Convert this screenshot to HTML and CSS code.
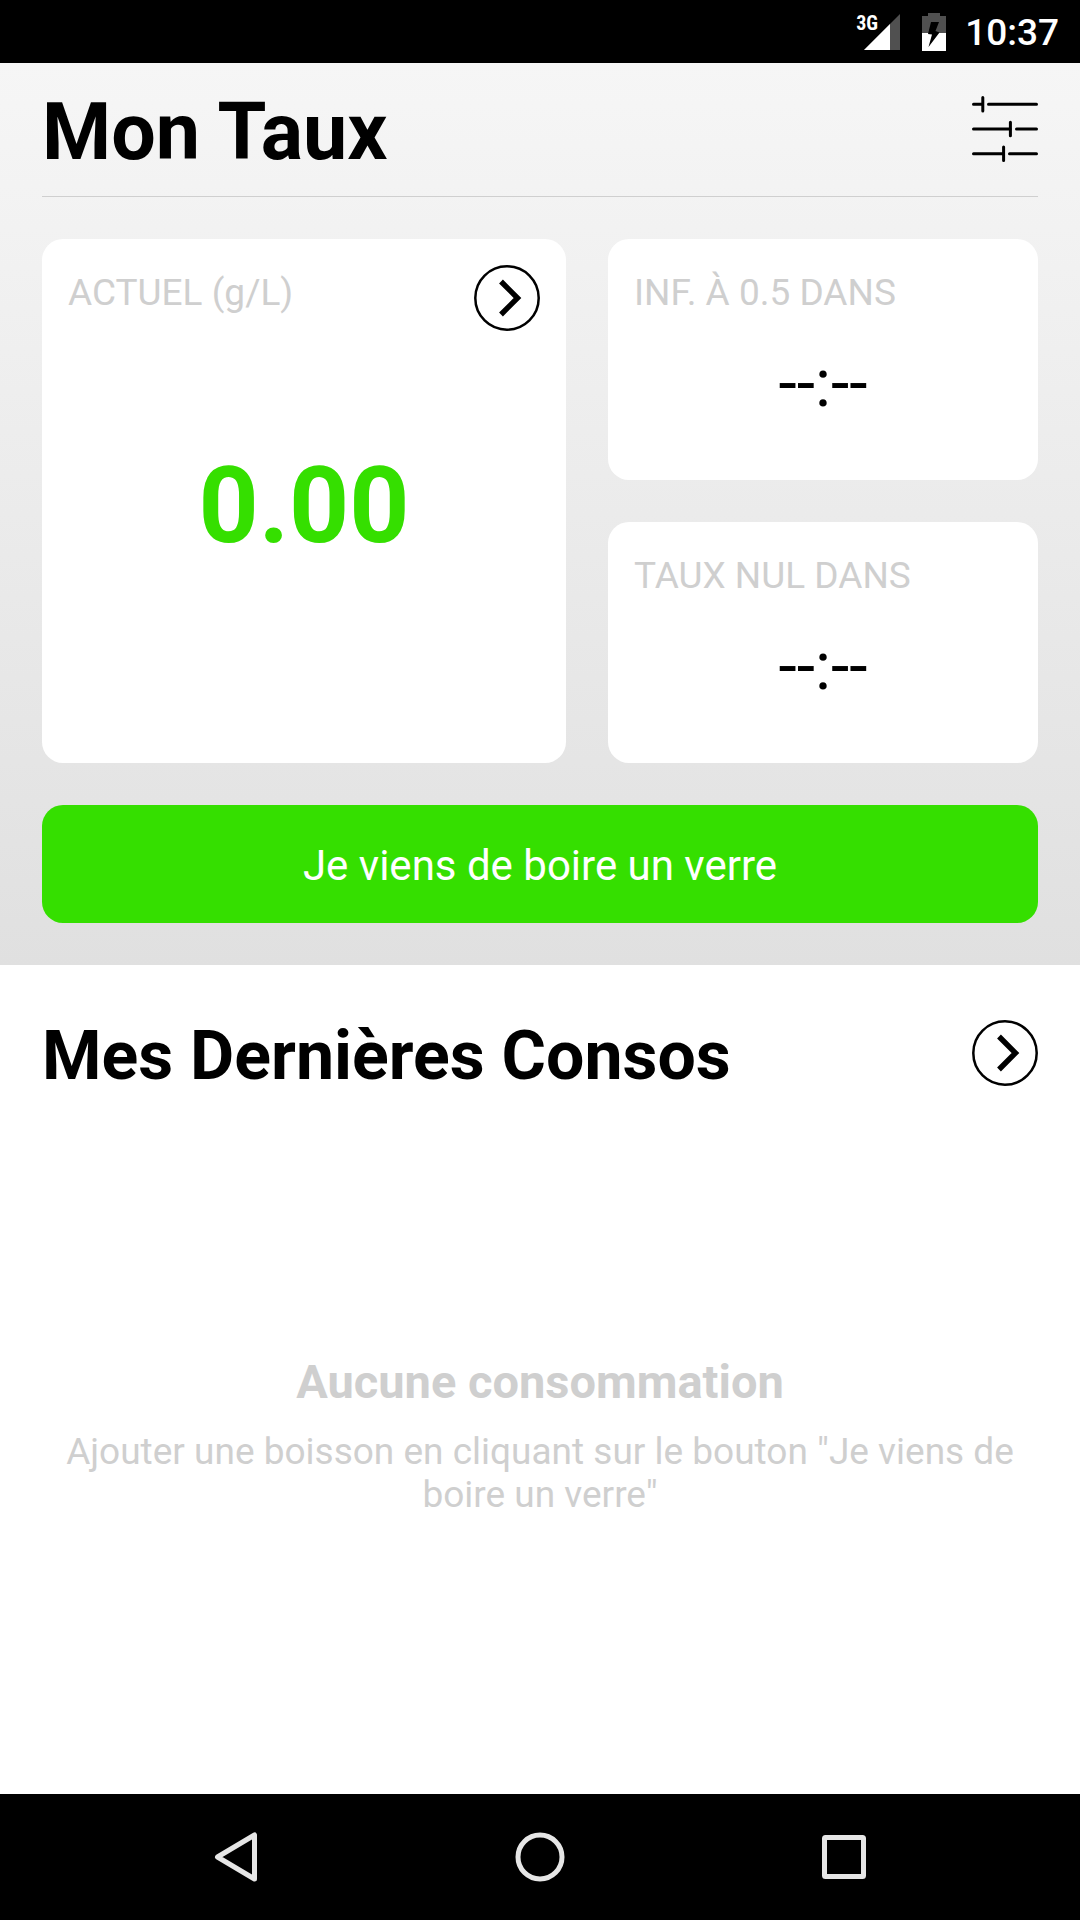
FILE: index.html
```html
<!DOCTYPE html>
<html lang="fr">
<head>
  <meta charset="utf-8">
  <meta name="viewport" content="width=device-width, initial-scale=1">
  <title>Mon Taux</title>
  <link rel="stylesheet" href="styles.css">
</head>
<body>
  <div class="status-bar">
    <div class="signal">
      <svg width="44" height="38" viewBox="0 0 44 38" aria-hidden="true">
        <path d="M44 1V37H8z" fill="#505050"/>
        <path d="M34 11V37H8z" fill="#fff"/>
      </svg>
      <span class="network">3G</span>
    </div>
    <svg width="24" height="38" viewBox="0 0 24 38" aria-hidden="true">
      <path d="M0 3H6V0H18V3H24V20H0z" fill="#505050"/>
      <path d="M0 20H24V38H0z" fill="#fff"/>
      <path d="M9 9H17L13.5 18L17.5 19.5L6.5 34L10 21.5L6 21z" fill="#000"/>
    </svg>
    <time class="clock">10:37</time>
  </div>

  <main class="screen">
    <section class="rate">
      <header class="row rate-header">
        <h1 class="title">Mon Taux</h1>
        <button class="icon-button" type="button" aria-label="Réglages">
          <svg width="66" height="66" viewBox="0 0 66 66" fill="none" stroke="#000" stroke-width="3" stroke-linecap="round">
            <path d="M1.5 8.3H10.5M16.5 8.3H64.5M1.5 33H38M44.5 33H64.5M1.5 57.7H31.5M37.5 57.7H64.5"/>
            <path d="M10.8 1.5V15M38.4 26.2V39.7M31.6 51V64.5"/>
          </svg>
        </button>
      </header>

      <div class="cards">
        <article class="card card-main">
          <div class="card-head">
            <h2 class="label">ACTUEL (g/L)</h2>
            <button class="icon-button" type="button" aria-label="Détail du taux">
              <svg width="66" height="66" viewBox="0 0 66 66" fill="none" stroke="#000">
                <circle cx="33" cy="33" r="31.7" stroke-width="2.5"/>
                <path d="M27 16.5L43.5 33L27 49.5" stroke-width="5.4"/>
              </svg>
            </button>
          </div>
          <p class="rate-value">0.00</p>
        </article>
        <article class="card">
          <h2 class="label">INF. À 0.5 DANS</h2>
          <p class="delay">--:--</p>
        </article>
        <article class="card">
          <h2 class="label">TAUX NUL DANS</h2>
          <p class="delay">--:--</p>
        </article>
      </div>

      <button class="add-button" type="button">Je viens de boire un verre</button>
    </section>

    <section class="history">
      <header class="row">
        <h2 class="subtitle">Mes Dernières Consos</h2>
        <button class="icon-button" type="button" aria-label="Toutes les consommations">
          <svg width="66" height="66" viewBox="0 0 66 66" fill="none" stroke="#000">
            <circle cx="33" cy="33" r="31.7" stroke-width="2.5"/>
            <path d="M27 16.5L43.5 33L27 49.5" stroke-width="5.4"/>
          </svg>
        </button>
      </header>
      <div class="empty">
        <h3 class="empty-title">Aucune consommation</h3>
        <p class="empty-text">Ajouter une boisson en cliquant sur le bouton "Je viens de boire un verre"</p>
      </div>
    </section>
  </main>

  <nav class="nav-bar">
    <button class="nav-button" type="button" aria-label="Retour">
      <svg width="54" height="54" viewBox="0 0 54 54" fill="none" stroke="#e6e6e6" stroke-width="5" stroke-linejoin="round">
        <path d="M45.5 5V49L8.5 27z"/>
      </svg>
    </button>
    <button class="nav-button" type="button" aria-label="Accueil">
      <svg width="54" height="54" viewBox="0 0 54 54" fill="none" stroke="#e6e6e6" stroke-width="5">
        <circle cx="27" cy="27" r="22"/>
      </svg>
    </button>
    <button class="nav-button" type="button" aria-label="Applications récentes">
      <svg width="54" height="54" viewBox="0 0 54 54" fill="none" stroke="#e6e6e6" stroke-width="5">
        <rect x="7.5" y="7.5" width="39" height="39" rx="1"/>
      </svg>
    </button>
  </nav>
</body>
</html>
```

FILE: styles.css
```css
* {
  box-sizing: border-box;
}

body {
  margin: 0;
  min-height: 100vh;
  display: flex;
  flex-direction: column;
  background: #fff;
  color: #000;
  font-family: Roboto, "Liberation Sans", sans-serif;
}

h1,
h2,
h3,
p {
  margin: 0;
}

button {
  padding: 0;
  border: 0;
  background: none;
  font: inherit;
  cursor: pointer;
}

svg {
  display: block;
}

/* System status bar */
.status-bar {
  display: flex;
  align-items: center;
  justify-content: flex-end;
  gap: 19px;
  height: 63px;
  padding-right: 21px;
  background: #000;
  color: #fff;
}

.signal {
  position: relative;
  margin-right: 3px;
}

.network {
  position: absolute;
  top: 0;
  left: 0;
  font-family: "Roboto Condensed", Roboto, "Liberation Sans", sans-serif;
  font-size: 20px;
  font-weight: 700;
  line-height: 20px;
}

.clock {
  font-size: 37px;
  font-weight: 500;
  line-height: 44px;
  padding-top: 2px;
}

/* Page */
.screen {
  flex: 1;
  display: flex;
  flex-direction: column;
}

.row {
  display: flex;
  align-items: center;
  justify-content: space-between;
}

.icon-button {
  flex: none;
}

.rate {
  padding: 0 42px 42px;
  background: linear-gradient(#f6f6f6, #e0e0e0);
}

.rate-header {
  padding: 16px 0 17px;
  border-bottom: 1px solid #cfcfcf;
}

.title {
  padding-top: 6px;
  font-size: 79px;
  line-height: 94px;
}

.cards {
  display: grid;
  grid-template-columns: 524fr 430fr;
  grid-template-rows: 241px 241px;
  gap: 42px;
  margin: 42px 0;
}

.card {
  display: flex;
  flex-direction: column;
  padding: 26px;
  border-radius: 21px;
  background: #fff;
}

.card-main {
  grid-row: span 2;
}

.card-head {
  display: flex;
  align-items: flex-start;
  justify-content: space-between;
}

.label {
  color: #cfcfcf;
  font-size: 37px;
  font-weight: 400;
  line-height: 56px;
}

.rate-value {
  flex: 1;
  display: flex;
  align-items: center;
  justify-content: center;
  padding-bottom: 54px;
  color: #35df00;
  font-size: 105px;
  font-weight: 700;
  line-height: 124px;
}

.delay {
  flex: 1;
  display: flex;
  align-items: center;
  justify-content: center;
  padding-bottom: 8px;
  font-size: 66px;
  line-height: 78px;
}

.add-button {
  display: block;
  width: 100%;
  padding: 36px 0 32px;
  border-radius: 21px;
  background: #35df00;
  color: #fff;
  font-size: 42px;
  line-height: 50px;
}

/* Latest drinks */
.history {
  flex: 1;
  display: flex;
  flex-direction: column;
  padding: 51px 42px 14px;
}

.subtitle {
  padding-top: 6px;
  font-size: 68px;
  line-height: 68px;
}

.empty {
  flex: 1;
  display: flex;
  flex-direction: column;
  justify-content: center;
  gap: 20px;
  padding: 0 21px;
  color: #cfcfcf;
  text-align: center;
}

.empty-title {
  font-size: 47px;
  line-height: 56px;
}

.empty-text {
  font-size: 37px;
  line-height: 43px;
}

/* System navigation bar */
.nav-bar {
  display: grid;
  grid-template-columns: repeat(3, 1fr);
  height: 126px;
  padding: 0 84px;
  background: #000;
}

.nav-button {
  display: flex;
  align-items: center;
  justify-content: center;
}
```
